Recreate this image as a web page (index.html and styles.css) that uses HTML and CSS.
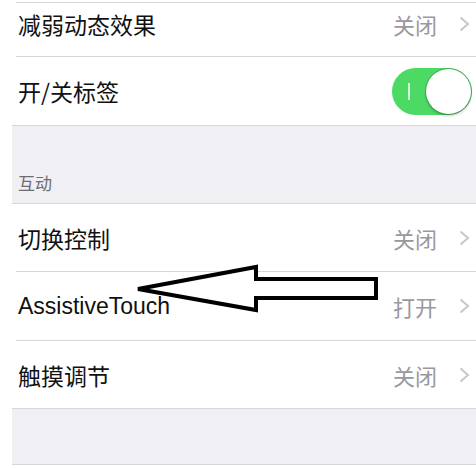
FILE: index.html
```html
<!DOCTYPE html>
<html lang="zh-CN">
<head>
<meta charset="utf-8">
<link rel="stylesheet" href="styles.css">
</head>
<body>
<div class="page">
  <div class="spacer"></div>
  <div class="sep"></div>
  <div class="row row-first">
    <span class="label">减弱动态效果</span>
    <span class="value">关闭</span>
    <span class="chev"><svg width="11" height="16" viewBox="0 0 11 16"><path d="M1.5 1.5 L9 8 L1.5 14.5" fill="none" stroke="#c7c7cc" stroke-width="2"/></svg></span>
  </div>
  <div class="sep"></div>
  <div class="row row-toggle">
    <span class="label">开/关标签</span>
    <span class="switch"><span class="mark"></span><span class="knob"></span></span>
  </div>
  <div class="line"></div>
  <div class="group-gap header"><span>互动</span></div>
  <div class="line"></div>
  <div class="row row-short">
    <span class="label">切换控制</span>
    <span class="value">关闭</span>
    <span class="chev"><svg width="11" height="16" viewBox="0 0 11 16"><path d="M1.5 1.5 L9 8 L1.5 14.5" fill="none" stroke="#c7c7cc" stroke-width="2"/></svg></span>
  </div>
  <div class="sep"></div>
  <div class="row">
    <span class="label latin">AssistiveTouch</span>
    <span class="value">打开</span>
    <span class="chev"><svg width="11" height="16" viewBox="0 0 11 16"><path d="M1.5 1.5 L9 8 L1.5 14.5" fill="none" stroke="#c7c7cc" stroke-width="2"/></svg></span>
  </div>
  <div class="sep"></div>
  <div class="row row-short">
    <span class="label">触摸调节</span>
    <span class="value">关闭</span>
    <span class="chev"><svg width="11" height="16" viewBox="0 0 11 16"><path d="M1.5 1.5 L9 8 L1.5 14.5" fill="none" stroke="#c7c7cc" stroke-width="2"/></svg></span>
  </div>
  <div class="line"></div>
  <div class="group-gap bottom-gap"></div>
  <div class="line"></div>
</div>
<svg class="arrow" width="476" height="468" viewBox="0 0 476 468">
  <polygon points="138,289 256,267 256,279 376,279 376,298 256,298 256,310" fill="#fff" stroke="#000" stroke-width="4" stroke-linejoin="miter"/>
</svg>
</body>
</html>
```
FILE: styles.css
```css
html, body {
  margin: 0;
  padding: 0;
  background: #fff;
}
body {
  width: 476px;
  height: 468px;
  overflow: hidden;
  position: relative;
  font-family: "Noto Sans CJK SC", "Liberation Sans", sans-serif;
}
.page {
  margin-left: 12px;
}
.spacer {
  height: 2px;
}
.sep {
  height: 1px;
  background: #d6d6da;
  margin-left: 4px;
}
.line {
  height: 1px;
  background: #d6d6da;
}
.row {
  height: 68px;
  display: flex;
  align-items: center;
  padding-left: 6px;
  padding-right: 6px;
  background: #fff;
  box-sizing: border-box;
}
.row-first {
  height: 53px;
  padding-bottom: 11px;
}
.row-short {
  height: 67px;
}
.row-toggle {
  padding-right: 4px;
}
.label {
  flex: 1;
  font-size: 23px;
  color: #111;
  line-height: 28px;
}
.latin {
  font-family: "Liberation Sans", sans-serif;
}
.value {
  font-size: 22px;
  color: #98989d;
  line-height: 28px;
  margin-right: 22px;
}
.chev {
  display: flex;
  align-items: center;
}
.switch {
  width: 80px;
  height: 47px;
  border-radius: 24px;
  background: #4cd964;
  position: relative;
  display: block;
}
.mark {
  position: absolute;
  left: 16px;
  top: 15px;
  width: 2px;
  height: 17px;
  background: #d8f5dd;
}
.knob {
  position: absolute;
  right: 1px;
  top: 1px;
  width: 45px;
  height: 45px;
  border-radius: 50%;
  background: #fff;
  box-shadow: 0 0 0 1px rgba(0,0,0,0.18), 0 2px 3px rgba(0,0,0,0.2);
}
.group-gap {
  background: #efeff4;
}
.header {
  height: 77px;
  display: flex;
  align-items: flex-end;
  padding-left: 6px;
  box-sizing: border-box;
  padding-bottom: 9px;
}
.header span {
  font-size: 17px;
  color: #6d6d72;
  line-height: 22px;
}
.bottom-gap {
  height: 55px;
}
.arrow {
  position: absolute;
  left: 0;
  top: 0;
  pointer-events: none;
}
```
